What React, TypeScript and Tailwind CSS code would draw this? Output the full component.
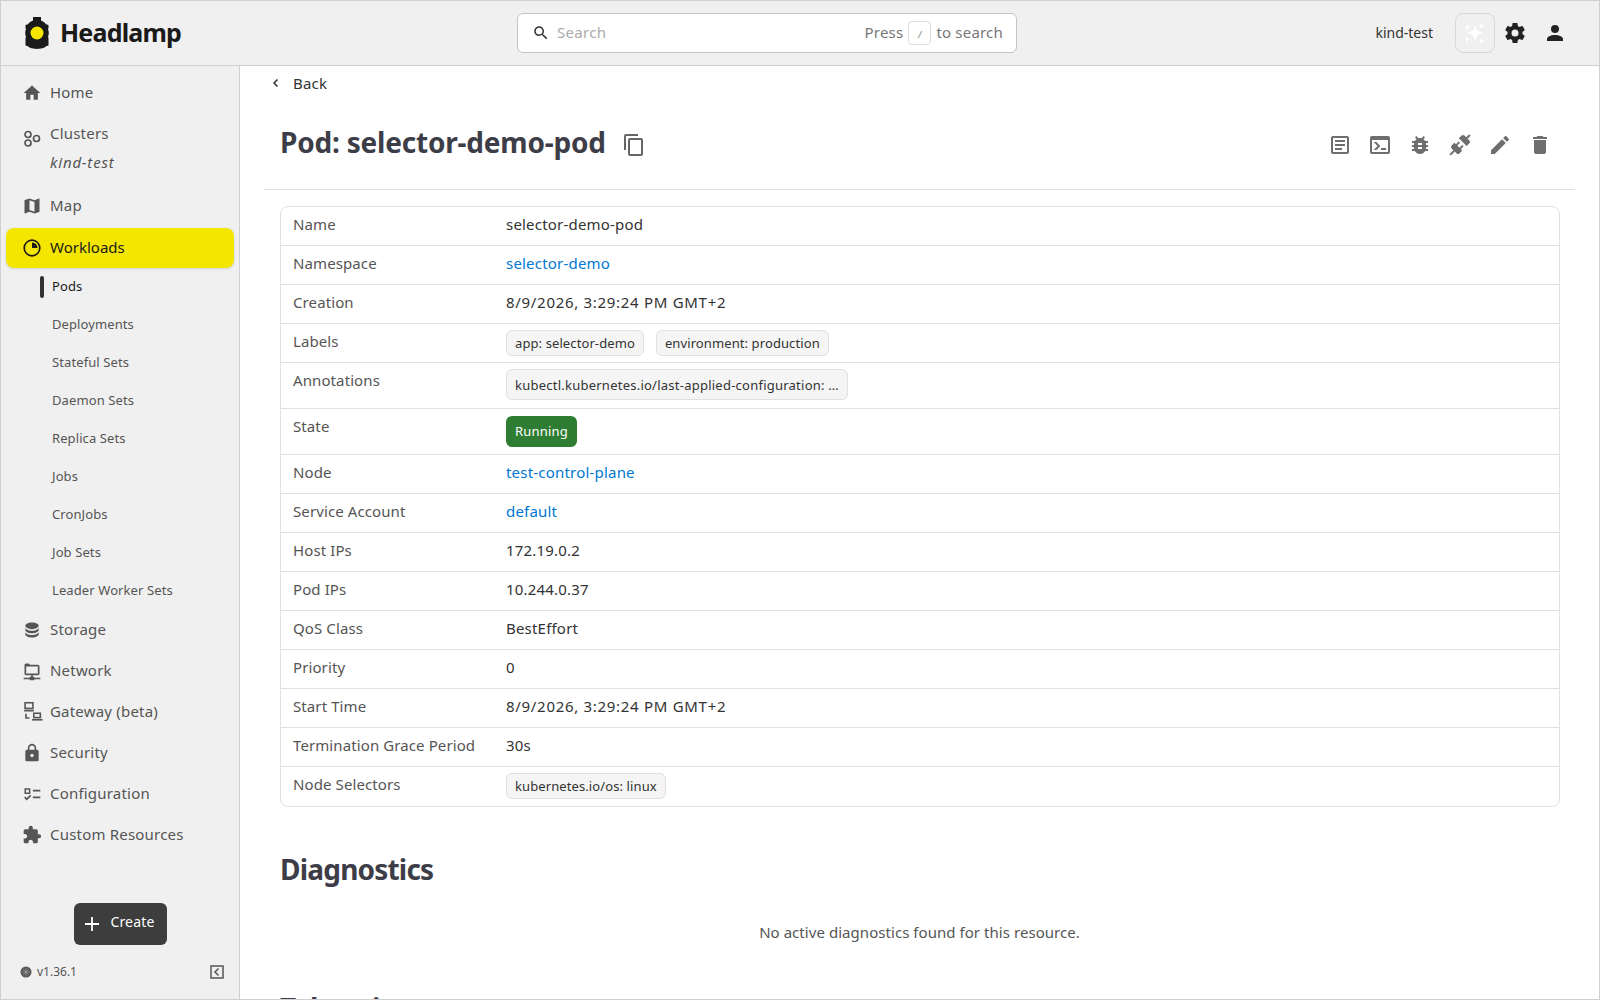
import { ReactNode } from "react";

const FONT = "font-['Noto_Sans',sans-serif]";

function Icon({ d, className = "w-6 h-6" }: { d: string; className?: string }) {
  return (
    <svg viewBox="0 0 24 24" fill="currentColor" className={className}>
      <path d={d} />
    </svg>
  );
}

const paths = {
  home: "M10 20v-6h4v6h5v-8h3L12 3 2 12h3v8z",
  map: "M20.5 3l-.16.03L15 5.1 9 3 3.36 4.9c-.21.07-.36.25-.36.48V20.5c0 .28.22.5.5.5l.16-.03L9 18.9l6 2.1 5.64-1.9c.21-.07.36-.25.36-.48V3.5c0-.28-.22-.5-.5-.5zM15 19l-6-2.11V5l6 2.11V19z",
  storage:
    "M12,3C7.58,3 4,4.79 4,7C4,9.21 7.58,11 12,11C16.42,11 20,9.21 20,7C20,4.79 16.42,3 12,3M4,9V12C4,14.21 7.58,16 12,16C16.42,16 20,14.21 20,12V9C20,11.21 16.42,13 12,13C7.58,13 4,11.21 4,9M4,14V17C4,19.21 7.58,21 12,21C16.42,21 20,19.21 20,17V14C20,16.21 16.42,18 12,18C7.58,18 4,16.21 4,14Z",
  network:
    "M3 15V5c0-1.1.9-2 2-2h3l1.5 1.5H19c1.1 0 2 .9 2 2V15c0 1.1-.9 2-2 2h-6v2h1a1 1 0 0 1 1 1h7v2h-7a1 1 0 0 1-1 1h-4a1 1 0 0 1-1-1H2v-2h7a1 1 0 0 1 1-1h1v-2H5c-1.1 0-2-.9-2-2zm2-8.5V15h14V6.500z",
  lock: "M18 8h-1V6c0-2.76-2.24-5-5-5S7 3.24 7 6v2H6c-1.1 0-2 .9-2 2v10c0 1.1.9 2 2 2h12c1.1 0 2-.9 2-2V10c0-1.1-.9-2-2-2zm-6 9c-1.1 0-2-.9-2-2s.9-2 2-2 2 .9 2 2-.9 2-2 2zm3.1-9H8.9V6c0-1.71 1.39-3.1 3.1-3.1 1.71 0 3.1 1.39 3.1 3.1v2z",
  config:
    "M3 5h7v7H3zm1.800 1.800v3.400h3.400V6.800zM13 7h9v2h-9zm0 8h9v2h-9zM2.500 16.500l1.400-1.400 1.800 1.800 4-4 1.400 1.400-5.400 5.400z",
  puzzle:
    "M20.5,11H19V7C19,5.89 18.1,5 17,5H13V3.5A2.5,2.5 0 0,0 10.5,1A2.5,2.5 0 0,0 8,3.5V5H4A2,2 0 0,0 2,7V10.8H3.5C5,10.8 6.2,12 6.2,13.5C6.2,15 5,16.2 3.5,16.2H2V20A2,2 0 0,0 4,22H7.8V20.5C7.8,19 9,17.8 10.5,17.8C12,17.8 13.2,19 13.2,20.5V22H17A2,2 0 0,0 19,20V16H20.5A2.5,2.5 0 0,0 23,13.5A2.5,2.5 0 0,0 20.5,11Z",
  search:
    "M15.5 14h-.79l-.28-.27C15.41 12.59 16 11.11 16 9.5 16 5.91 13.09 3 9.5 3S3 5.91 3 9.5 5.91 16 9.5 16c1.61 0 3.09-.59 4.23-1.57l.27.28v.79l5 4.99L20.49 19l-4.99-5zm-6 0C7.01 14 5 11.99 5 9.5S7.01 5 9.5 5 14 7.01 14 9.5 11.99 14 9.5 14z",
  cog: "M12,15.5A3.5,3.5 0 0,1 8.5,12A3.5,3.5 0 0,1 12,8.5A3.5,3.5 0 0,1 15.5,12A3.5,3.5 0 0,1 12,15.5M19.43,12.97C19.47,12.65 19.5,12.33 19.5,12C19.5,11.67 19.47,11.34 19.43,11L21.54,9.37C21.73,9.22 21.78,8.95 21.66,8.73L19.66,5.27C19.54,5.05 19.27,4.96 19.05,5.05L16.56,6.05C16.04,5.66 15.5,5.32 14.87,5.07L14.5,2.42C14.46,2.18 14.25,2 14,2H10C9.75,2 9.54,2.18 9.5,2.42L9.13,5.07C8.5,5.32 7.96,5.66 7.44,6.05L4.95,5.05C4.73,4.96 4.46,5.05 4.34,5.27L2.34,8.73C2.21,8.95 2.27,9.22 2.46,9.37L4.57,11C4.53,11.34 4.5,11.67 4.5,12C4.5,12.33 4.53,12.65 4.57,12.97L2.46,14.63C2.27,14.78 2.21,15.05 2.34,15.27L4.34,18.73C4.46,18.95 4.73,19.03 4.95,18.95L7.44,17.94C7.96,18.34 8.5,18.68 9.13,18.93L9.5,21.58C9.54,21.82 9.75,22 10,22H14C14.25,22 14.46,21.82 14.5,21.58L14.87,18.93C15.5,18.67 16.04,18.34 16.56,17.94L19.05,18.95C19.27,19.03 19.54,18.95 19.66,18.73L21.66,15.27C21.78,15.05 21.73,14.78 21.54,14.63L19.43,12.97Z",
  account:
    "M12,4A4,4 0 0,1 16,8A4,4 0 0,1 12,12A4,4 0 0,1 8,8A4,4 0 0,1 12,4M12,14C16.42,14 20,15.79 20,18V20H4V18C4,15.79 7.58,14 12,14Z",
  copy: "M19,21H8V7H19M19,5H8A2,2 0 0,0 6,7V21A2,2 0 0,0 8,23H19A2,2 0 0,0 21,21V7A2,2 0 0,0 19,5M16,1H4A2,2 0 0,0 2,3V17H4V3H16V1Z",
  logs: "M5,3C3.89,3 3,3.89 3,5V19C3,20.11 3.89,21 5,21H19C20.11,21 21,20.11 21,19V5C21,3.89 20.11,3 19,3H5M5,5H19V19H5V5M7,7V9H17V7H7M7,11V13H17V11H7M7,15V17H14V15H7Z",
  terminal:
    "M20,19V7H4V19H20M20,3A2,2 0 0,1 22,5V19A2,2 0 0,1 20,21H4A2,2 0 0,1 2,19V5C2,3.89 2.9,3 4,3H20M13,17V15H18V17H13M9.58,13L5.57,9H8.4L11.7,12.3C12.09,12.69 12.09,13.33 11.7,13.72L8.42,17H5.59L9.58,13Z",
  bug: "M14,12H10V10H14M14,16H10V14H14M20,8H17.19C16.74,7.22 16.12,6.55 15.37,6.04L17,4.41L15.59,3L13.42,5.17C12.96,5.06 12.5,5 12,5C11.5,5 11.04,5.06 10.59,5.17L8.41,3L7,4.41L8.62,6.04C7.88,6.55 7.26,7.22 6.81,8H4V10H6.09C6.04,10.33 6,10.66 6,11V12H4V14H6V15C6,15.34 6.04,15.67 6.09,16H4V18H6.81C7.85,19.79 9.78,21 12,21C14.22,21 16.15,19.79 17.19,18H20V16H17.91C17.96,15.67 18,15.34 18,15V14H20V12H18V11C18,10.66 17.96,10.33 17.91,10H20V8Z",
  connection:
    "M21.4 7.5C22.2 8.3 22.2 9.6 21.4 10.3L18.6 13.1L10.8 5.3L13.6 2.5C14.4 1.7 15.7 1.7 16.4 2.5L18.2 4.3L21.2 1.3L22.6 2.7L19.6 5.7L21.4 7.5M15.6 13.3L14.2 11.9L11.4 14.7L9.3 12.6L12.1 9.8L10.7 8.4L7.9 11.2L6.4 9.8L3.6 12.6C2.8 13.4 2.8 14.7 3.6 15.4L5.4 17.2L1.4 21.2L2.8 22.6L6.8 18.6L8.6 20.4C9.4 21.2 10.7 21.2 11.4 20.4L14.2 17.6L12.8 16.2L15.6 13.3Z",
  pencil:
    "M20.71,7.04C21.1,6.65 21.1,6 20.71,5.63L18.37,3.29C18,2.9 17.35,2.9 16.96,3.29L15.12,5.12L18.87,8.87M3,17.25V21H6.75L17.81,9.93L14.06,6.18L3,17.25Z",
  trash:
    "M19,4H15.5L14.5,3H9.5L8.5,4H5V6H19M6,19A2,2 0 0,0 8,21H16A2,2 0 0,0 18,19V7H6V19Z",
  sparkle:
    "M12 4l2.200 5.800L20 12l-5.800 2.200L12 20l-2.200-5.800L4 12l5.800-2.200zM18.500 2l.9 2.100 2.100.9-2.100.9-.9 2.100-.9-2.100-2.100-.9 2.100-.9zM18.500 17l.9 2.100 2.100.9-2.100.9-.9 2.100-.9-2.100-2.100-.9 2.100-.9zM3 5h4v1.500H4.500V9H3zM3 15l3.500 4H4.500v2H3z",
};

function Logo() {
  return (
    <svg viewBox="0 0 26 32" className="w-[26px] h-8">
      <path
        fill="#1a1a1a"
        d="M9 0h8v3.500c2 .7 3.800 2 5 3.700l2.500.8v3l-.5 1c.5 1.300.8 2.600.8 4s-.3 2.700-.8 4l.5 1v7.500l-2.500.7c-1.200 1.500-3 2-5 2.300L13 32l-4-.5c-2-.3-3.800-.8-5-2.300L1.500 28.500V21l.5-1c-.5-1.300-.8-2.600-.8-4s.3-2.700.8-4l-.5-1V8L4 7.200c1.200-1.700 3-3 5-3.700z"
      />
      <circle cx="13" cy="16" r="6.500" fill="#f5e600" />
    </svg>
  );
}

function GatewayIcon() {
  return (
    <svg viewBox="0 0 24 24" fill="none" stroke="currentColor" strokeWidth="1.800" className="w-[21px] h-[21px]">
      <rect x="3.500" y="2" width="9" height="6.500" />
      <path d="M2.500 11h11M4.500 14.500v5h4" />
      <rect x="13.500" y="14" width="7.500" height="5" />
      <path d="M11.500 21.500h12" />
    </svg>
  );
}

function NavItem({ icon, label }: { icon: ReactNode; label: string }) {
  return (
    <div className="flex items-center h-[41px] pl-[21px] text-[#555] text-[15px] tracking-[0.2px]">
      <span className="w-[28px] flex justify-start">{icon}</span>
      {label}
    </div>
  );
}

const subItems = [
  "Pods",
  "Deployments",
  "Stateful Sets",
  "Daemon Sets",
  "Replica Sets",
  "Jobs",
  "CronJobs",
  "Job Sets",
  "Leader Worker Sets",
];

function Sidebar() {
  return (
    <aside className="w-[239px] shrink-0 bg-[#f0f0f0] border-r border-[#d0d0d0] flex flex-col overflow-hidden">
      <div className="pt-[6px]">
        <NavItem icon={<Icon d={paths.home} className="w-5 h-5" />} label="Home" />
        <div className="flex h-[72px] pl-[21px] pt-[2px] text-[#555] text-[15px] tracking-[0.2px]">
          <span className="w-[28px] pt-[14px]">
            <svg viewBox="0 0 20 20" fill="none" stroke="currentColor" strokeWidth="1.700" className="w-5 h-5">
              <circle cx="6" cy="5.500" r="3" />
              <circle cx="14.500" cy="9.500" r="3" />
              <circle cx="6" cy="14" r="3" />
            </svg>
          </span>
          <div className="flex flex-col">
            <span className="leading-[37px]">Clusters</span>
            <span className="italic leading-[21px] tracking-[0.8px]">kind-test</span>
          </div>
        </div>
        <NavItem icon={<Icon d={paths.map} className="w-5 h-5" />} label="Map" />
        <div className="mx-[5px] mt-[2px] h-[40px] rounded-lg bg-[#f5e600] shadow-sm flex items-center pl-[16px] text-[#1a1a1a] text-[15px]">
          <span className="w-[28px]">
            <svg viewBox="0 0 20 20" className="w-5 h-5">
              <circle cx="10" cy="10" r="7.800" fill="none" stroke="currentColor" strokeWidth="1.700" />
              <path d="M10 4.500V10h5.500A5.500 5.500 0 0 0 10 4.500z" fill="currentColor" />
            </svg>
          </span>
          <span className="-mt-[2px]">Workloads</span>
        </div>
        <div className="flex flex-col -mb-[1px]">
          {subItems.map((s, i) => (
            <div key={s} className="relative h-[38px] flex items-center pl-[51px] text-[13px] tracking-[0.1px] text-[#555]">
              {i === 0 && <span className="absolute left-[39px] top-[8px] h-[22px] w-[4px] rounded bg-[#333]" />}
              <span className={i === 0 ? "text-[#1a1a1a]" : ""}>{s}</span>
            </div>
          ))}
        </div>
        <NavItem icon={<Icon d={paths.storage} className="w-5 h-5" />} label="Storage" />
        <NavItem icon={<Icon d={paths.network} className="w-5 h-5" />} label="Network" />
        <NavItem icon={<GatewayIcon />} label="Gateway (beta)" />
        <NavItem icon={<Icon d={paths.lock} className="w-5 h-5" />} label="Security" />
        <NavItem icon={<Icon d={paths.config} className="w-5 h-5" />} label="Configuration" />
        <NavItem icon={<Icon d={paths.puzzle} className="w-5 h-5" />} label="Custom Resources" />
      </div>
      <div className="flex-1" />
      <div className="flex justify-center">
        <div className="w-[93px] h-[42px] rounded-md bg-[#3d3d3d] text-white flex items-center justify-center gap-[11px] text-[14px] tracking-[0.2px]">
          <svg viewBox="0 0 14 14" className="w-[14px] h-[14px]" stroke="currentColor" strokeWidth="1.800">
            <path d="M7 0v14M0 7h14" />
          </svg>
          <span className="-mt-[5px]">Create</span>
        </div>
      </div>
      <div className="flex items-center justify-between h-[54px] pl-[19px] pr-[15px] text-[12px] text-[#555]">
        <span className="flex items-center gap-[5px]">
          <svg viewBox="0 0 12 12" className="w-3 h-3">
            <circle cx="6" cy="6" r="5.500" fill="#555" />
            <path d="M6 1.500v9M1.500 6h9M3 3l6 6M9 3l-6 6" stroke="#aaa" strokeWidth="0.600" />
          </svg>
          v1.36.1
        </span>
        <svg viewBox="0 0 14 14" className="w-[14px] h-[14px]" fill="none" stroke="#555" strokeWidth="1.500">
          <rect x="1" y="1" width="12" height="12" />
          <path d="M8.500 3.500L5 7l3.500 3.500" />
        </svg>
      </div>
    </aside>
  );
}

function Header() {
  return (
    <header className="h-[65px] shrink-0 bg-[#f0f0f0] border-b border-[#d0d0d0] relative flex items-center">
      <div className="w-[506px] pl-[23px] flex items-center gap-[10px] shrink-0">
        <Logo />
        <span className="font-bold text-[25px] leading-none text-[#1a1a1a] tracking-[-0.8px] -mt-[1px]">Headlamp</span>
      </div>
      <div className="w-[500px] h-[40px] ml-[10px] bg-white border border-[#c4c4c4] rounded-md flex items-center pl-[14px] pr-[13px] shrink-0">
        <Icon d={paths.search} className="w-[18px] h-[18px] text-[#333]" />
        <span className="ml-[7px] -mt-[2px] text-[15px] text-[#aaa] tracking-[0.3px]">Search</span>
        <span className="ml-auto flex items-center text-[15px] text-[#777] tracking-[0.2px]">
          <span className="-mt-[2px]">Press</span>
          <kbd className="mx-[5px] w-[23px] h-[24px] rounded border border-[#ddd] flex items-center justify-center pt-[3px] text-[9px] font-['Noto_Sans',sans-serif] italic">/</kbd>
          <span className="-mt-[2px]">to search</span>
        </span>
      </div>
      <div className="ml-auto flex items-center pr-[24px]">
        <span className="text-[14px] text-[#333] mr-[22px] -mt-[2px]">kind-test</span>
        <div className="w-10 h-10 rounded-lg border border-[#d8d8d8] flex items-center justify-center text-white">
          <Icon d={paths.sparkle} />
        </div>
        <div className="w-10 flex justify-center text-[#222]"><Icon d={paths.cog} /></div>
        <div className="w-10 flex justify-center text-[#222]"><Icon d={paths.account} /></div>
      </div>
    </header>
  );
}

function Chip({ children }: { children: ReactNode }) {
  return (
    <span className="inline-flex items-center h-[26px] px-2 rounded-md border border-[#e0e0e0] bg-[#f5f5f5] text-[13px] tracking-[0.1px] text-[#333]">
      {children}
    </span>
  );
}

function Row({ label, children, tall }: { label: string; children: ReactNode; tall?: boolean }) {
  return (
    <div className={`flex border-b border-[#e0e0e0] last:border-b-0 ${tall ? "h-[46px]" : "h-[39px]"}`}>
      <div className="w-[225px] pl-3 pt-[7px] text-[#555] text-[15px] leading-[20px] tracking-[0.1px] shrink-0">{label}</div>
      <div className="flex-1 text-[#333] text-[15px] tracking-[0.2px] flex items-start pt-[7px] leading-[20px] gap-3">{children}</div>
    </div>
  );
}

const A = ({ children }: { children: ReactNode }) => <span className="text-[#0078d4]">{children}</span>;
const Time = ({ children }: { children: ReactNode }) => <span className="tracking-[0.7px]">{children}</span>;

function DetailsTable() {
  return (
    <div className="ml-[16px] mr-[15px] border border-[#e0e0e0] rounded-lg">
      <Row label="Name">selector-demo-pod</Row>
      <Row label="Namespace"><A>selector-demo</A></Row>
      <Row label="Creation"><Time>8/9/2026, 3:29:24 PM GMT+2</Time></Row>
      <Row label="Labels">
        <span className="-mt-[1px] flex gap-3"><Chip>app: selector-demo</Chip><Chip>environment: production</Chip></span>
      </Row>
      <Row label="Annotations" tall>
        <span className="-mt-[1px]"><span className="inline-flex items-center h-[31px] px-2 rounded-md border border-[#e0e0e0] bg-[#f5f5f5] text-[13px] tracking-[0.24px] text-[#333]">kubectl.kubernetes.io/last-applied-configuration: …</span></span>
      </Row>
      <Row label="State" tall>
        <span className="inline-flex items-center h-[31px] px-[9px] pb-[2px] rounded-md bg-[#2e7d32] text-white text-[13px]">Running</span>
      </Row>
      <Row label="Node"><A>test-control-plane</A></Row>
      <Row label="Service Account"><A>default</A></Row>
      <Row label="Host IPs">172.19.0.2</Row>
      <Row label="Pod IPs">10.244.0.37</Row>
      <Row label="QoS Class">BestEffort</Row>
      <Row label="Priority">0</Row>
      <Row label="Start Time"><Time>8/9/2026, 3:29:24 PM GMT+2</Time></Row>
      <Row label="Termination Grace Period">30s</Row>
      <Row label="Node Selectors">
        <span className="-mt-[1px]"><Chip>kubernetes.io/os: linux</Chip></span>
      </Row>
    </div>
  );
}

export default function App() {
  const actions = [paths.logs, paths.terminal, paths.bug, paths.connection, paths.pencil, paths.trash];
  return (
    <div className={`${FONT} w-screen h-screen overflow-hidden flex flex-col border border-[#d0d0d0] bg-white`}>
      <Header />
      <div className="flex flex-1 min-h-0">
        <Sidebar />
        <main className="flex-1 min-w-0 px-[24px] overflow-hidden">
          <div className="flex items-center h-[34px] text-[#333] text-[15px] tracking-[0.2px]">
            <svg viewBox="0 0 10 10" className="w-[10px] h-[10px] ml-[7px] mr-[12px]" fill="none" stroke="#333" strokeWidth="1.500">
              <path d="M6.500 1.500L3 5l3.500 3.500" />
            </svg>
            Back
          </div>
          <div className="flex items-center h-[90px] border-b border-[#e0e0e0] pb-[4px]">
            <h1 className="pl-[16px] -mt-[2px] text-[28px] font-bold text-[#3d3d47] tracking-[-0.2px]">Pod: selector-demo-pod</h1>
            <span className="ml-[16px] text-[#666] mt-[4px]"><Icon d={paths.copy} /></span>
            <div className="ml-auto flex items-center gap-4 pr-[23px] text-[#6e6e6e] mt-[4px]">
              {actions.map((d) => <Icon key={d} d={d} />)}
            </div>
          </div>
          <div className="pt-[16px]">
            <DetailsTable />
          </div>
          <h2 className="pl-[16px] mt-[40px] text-[28px] font-bold leading-[45px] text-[#3d3d47] tracking-[-0.8px]">Diagnostics</h2>
          <p className="mt-[29px] text-center text-[15px] text-[#555] tracking-[0.05px]">No active diagnostics found for this resource.</p>
          <h2 className="pl-[16px] mt-[42px] text-[28px] font-bold leading-[45px] text-[#3d3d47] tracking-[-0.8px]">Tolerations</h2>
        </main>
      </div>
    </div>
  );
}
